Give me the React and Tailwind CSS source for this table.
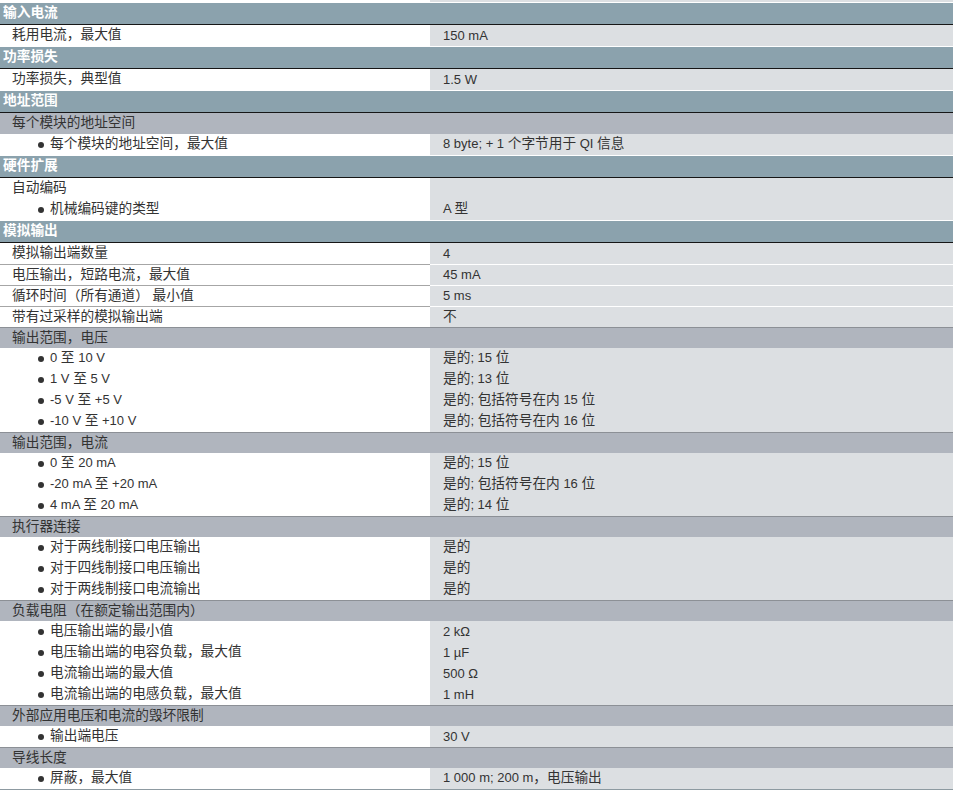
const CJK = /([\u2E80-\u9FFF\u3000-\u303F\uFF00-\uFFEF]+)/

function T({ s }) {
  return (
    <span className="whitespace-pre">
      {s.split(CJK).map((part, i) =>
        i % 2 === 1 ? (
          <span key={i} className="text-[13.7px]">
            {part}
          </span>
        ) : (
          part
        )
      )}
    </span>
  )
}

function Header({ title }) {
  return (
    <div className="flex h-[23px] items-center border-t border-b border-t-white border-b-[#161616] bg-[#8ba2ad] pl-[3px] font-bold text-white">
      <T s={title} />
    </div>
  )
}

function Sub({ title, top = true }) {
  return (
    <div
      className={`flex h-[21px] items-center bg-[#b0b5be] pl-[12px] ${
        top ? 'border-t border-[#8c9096]' : ''
      }`}
    >
      <T s={title} />
    </div>
  )
}

function Row({ label, value, sep }) {
  return (
    <div className="flex h-[21px]">
      <div className={`flex w-[430px] items-center pl-[12px] ${sep ? 'border-t border-[#a6a6a6]' : ''}`}>
        <T s={label} />
      </div>
      <div className={`flex flex-1 items-center bg-[#dcdfe2] pl-[13px] ${sep ? 'border-t border-white' : ''}`}>
        <T s={value} />
      </div>
    </div>
  )
}

function Bullet({ label, value }) {
  return (
    <div className="flex h-[21px]">
      <div className="flex w-[430px] items-center pl-[38px]">
        <span className="mr-[6px] h-[6px] w-[6px] rounded-full bg-[#333]" />
        <T s={label} />
      </div>
      <div className="flex flex-1 items-center bg-[#dcdfe2] pl-[13px]">
        <T s={value} />
      </div>
    </div>
  )
}

function Group({ title, items }) {
  return (
    <div>
      <Sub title={title} />
      {items.map(([l, v]) => (
        <Bullet key={l} label={l} value={v} />
      ))}
    </div>
  )
}

const SIMPLE = [
  ['模拟输出端数量', '4'],
  ['电压输出，短路电流，最大值', '45 mA'],
  ['循环时间（所有通道） 最小值', '5 ms'],
  ['带有过采样的模拟输出端', '不'],
]

const GROUPS = [
  {
    title: '输出范围，电压',
    items: [
      ['0 至 10 V', '是的; 15 位'],
      ['1 V 至 5 V', '是的; 13 位'],
      ['-5 V 至 +5 V', '是的; 包括符号在内 15 位'],
      ['-10 V 至 +10 V', '是的; 包括符号在内 16 位'],
    ],
  },
  {
    title: '输出范围，电流',
    items: [
      ['0 至 20 mA', '是的; 15 位'],
      ['-20 mA 至 +20 mA', '是的; 包括符号在内 16 位'],
      ['4 mA 至 20 mA', '是的; 14 位'],
    ],
  },
  {
    title: '执行器连接',
    items: [
      ['对于两线制接口电压输出', '是的'],
      ['对于四线制接口电压输出', '是的'],
      ['对于两线制接口电流输出', '是的'],
    ],
  },
  {
    title: '负载电阻（在额定输出范围内）',
    items: [
      ['电压输出端的最小值', '2 kΩ'],
      ['电压输出端的电容负载，最大值', '1 µF'],
      ['电流输出端的最大值', '500 Ω'],
      ['电流输出端的电感负载，最大值', '1 mH'],
    ],
  },
  {
    title: '外部应用电压和电流的毁坏限制',
    items: [['输出端电压', '30 V']],
  },
  {
    title: '导线长度',
    items: [['屏蔽，最大值', '1 000 m; 200 m，电压输出']],
  },
]

export default function App() {
  return (
    <div className="min-h-screen w-[953px] bg-white font-['Liberation_Sans','Noto_Sans_CJK_SC',sans-serif] text-[13px] text-[#333]">
      <div className="flex h-[2px]">
        <div className="w-[430px]" />
        <div className="flex-1 bg-[#dcdfe2]" />
      </div>

      <Header title="输入电流" />
      <Row label="耗用电流，最大值" value="150 mA" />

      <Header title="功率损失" />
      <Row label="功率损失，典型值" value="1.5 W" />

      <Header title="地址范围" />
      <Sub title="每个模块的地址空间" top={false} />
      <Bullet label="每个模块的地址空间，最大值" value="8 byte; + 1 个字节用于 QI 信息" />

      <Header title="硬件扩展" />
      <div className="flex">
        <div className="w-[430px]">
          <div className="flex h-[21px] items-center pl-[12px]">
            <T s="自动编码" />
          </div>
          <div className="flex h-[21px] items-center pl-[38px]">
            <span className="mr-[6px] h-[6px] w-[6px] rounded-full bg-[#333]" />
            <T s="机械编码键的类型" />
          </div>
        </div>
        <div className="flex flex-1 flex-col bg-[#dcdfe2] pl-[13px]">
          <div className="h-[21px]" />
          <div className="flex h-[21px] items-center">
            <T s="A 型" />
          </div>
        </div>
      </div>

      <Header title="模拟输出" />
      {SIMPLE.map(([l, v], i) => (
        <Row key={l} label={l} value={v} sep={i > 0} />
      ))}
      {GROUPS.map((g) => (
        <Group key={g.title} title={g.title} items={g.items} />
      ))}
      <div className="h-px bg-[#8d9aa1]" />
    </div>
  )
}
